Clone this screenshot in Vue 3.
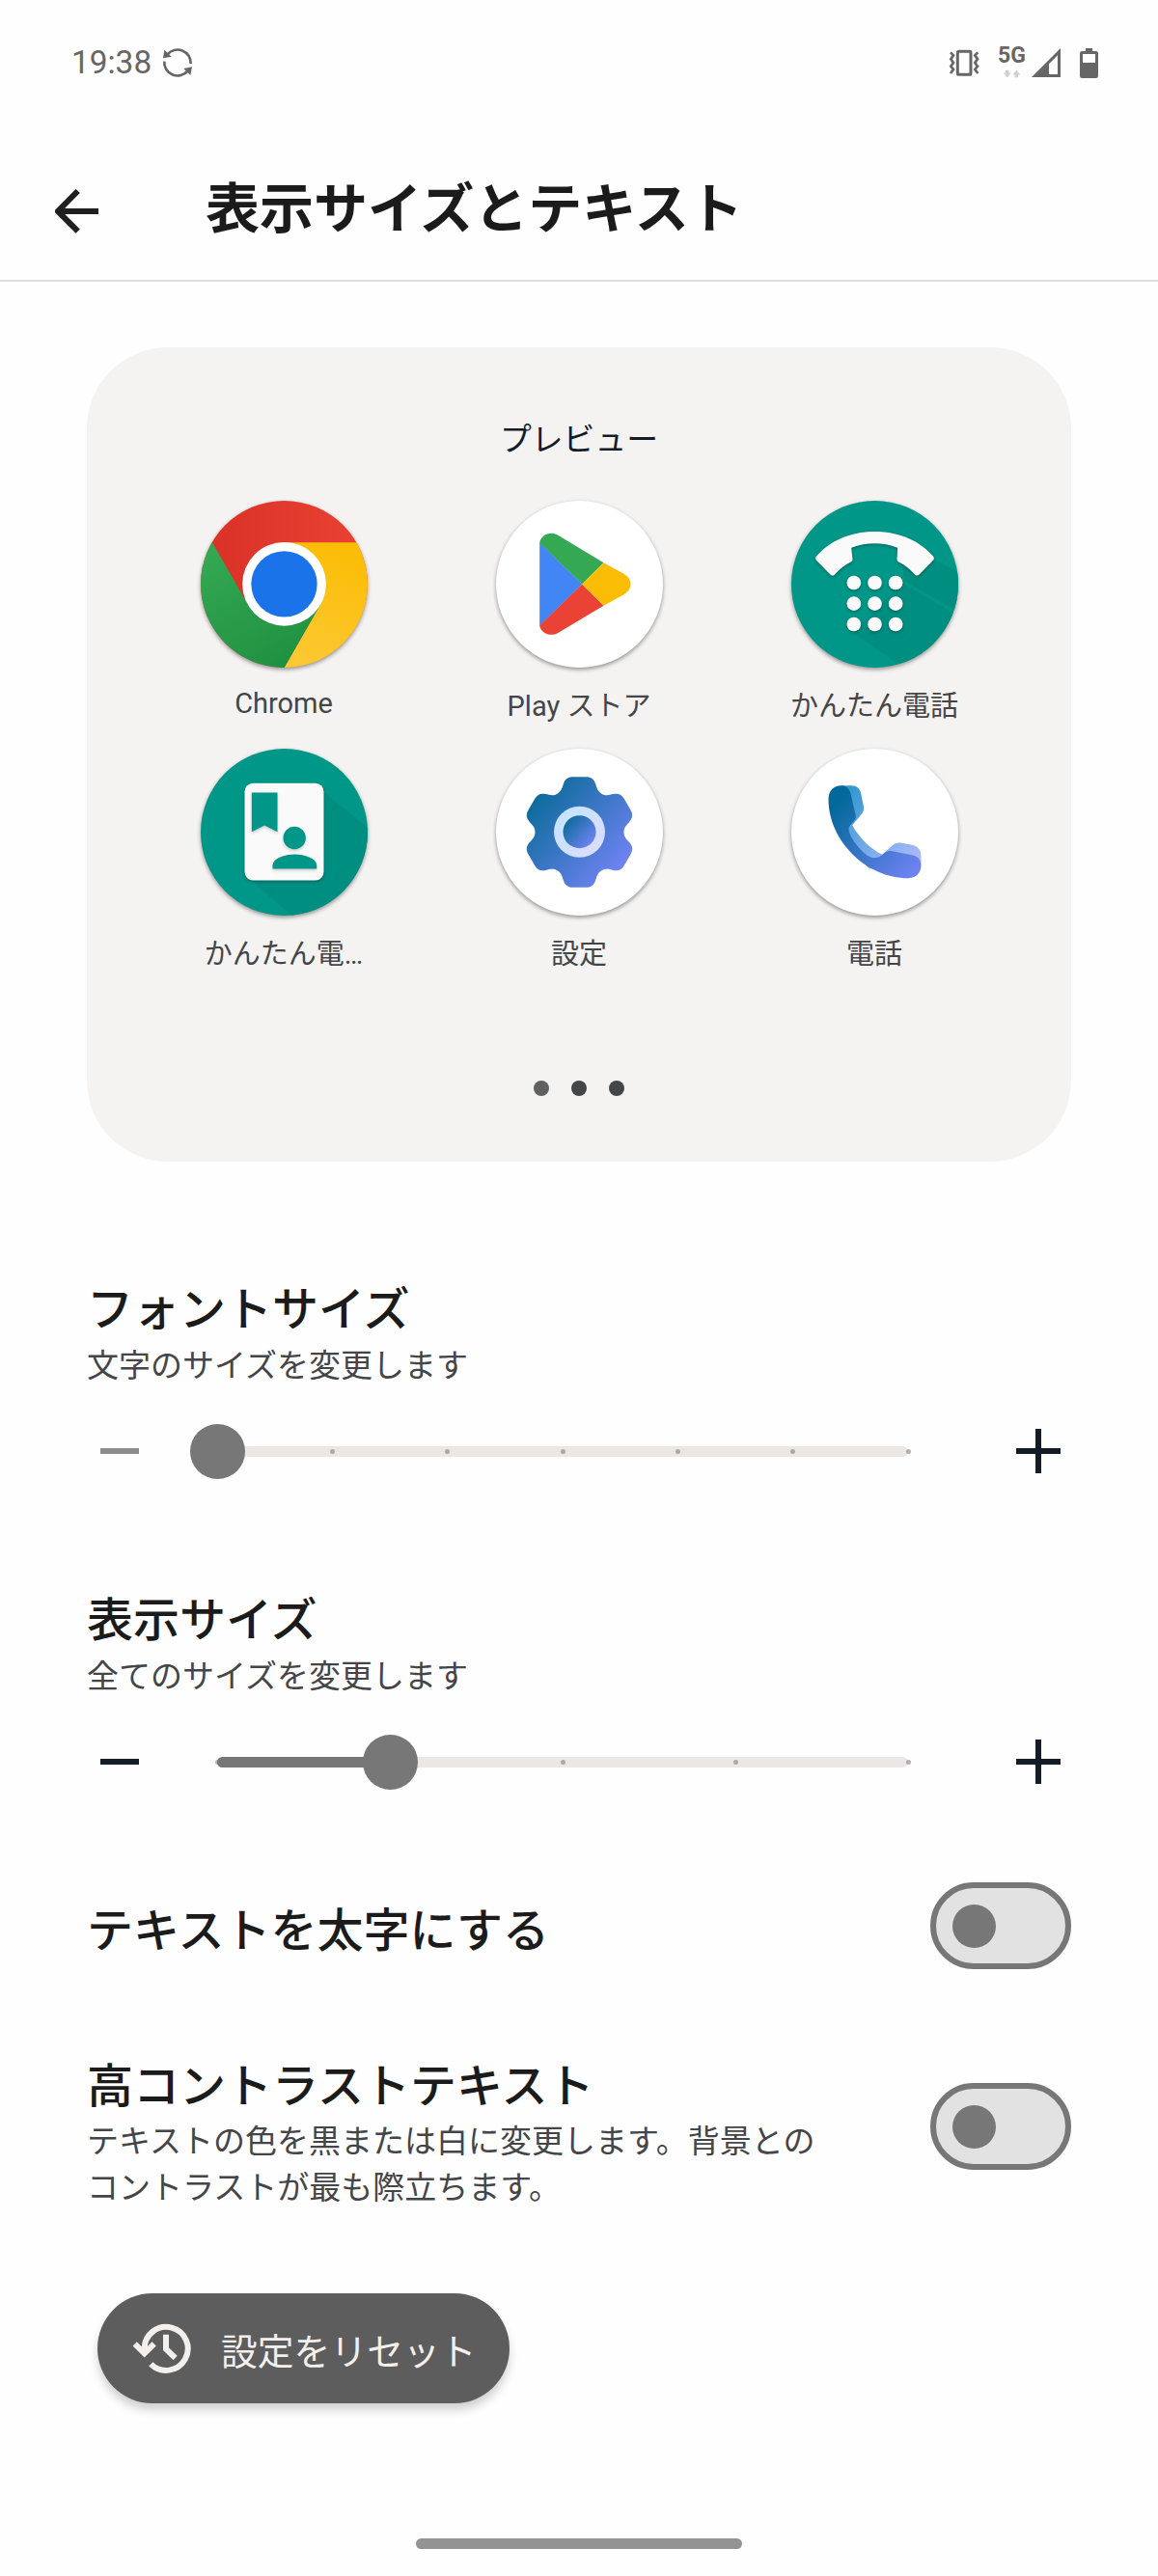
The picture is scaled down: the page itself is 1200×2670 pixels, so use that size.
<script setup>
import { ref } from 'vue'

// Apps shown inside the preview card
const apps = [
  { id: 'chrome', label: 'Chrome', viewBox: '82.5 56 519 519' },
  { id: 'play', label: 'Play ストア', viewBox: '70.5 296.5 519 519' },
  { id: 'easyphone', label: 'かんたん電話', viewBox: '88.5 56 519 519' },
  { id: 'contacts', label: 'かんたん電…', viewBox: '82.5 47.5 519 519' },
  { id: 'settings', label: '設定', viewBox: '70.5 47.5 519 519' },
  { id: 'phone', label: '電話', viewBox: '88.5 47.5 519 519' },
]

// Slider sections, value is the selected step
const sliders = ref([
  { title: 'フォントサイズ', text: '文字のサイズを変更します', value: 0, steps: 6 },
  { title: '表示サイズ', text: '全てのサイズを変更します', value: 1, steps: 4 },
])

const boldText = ref(false)
const highContrast = ref(false)

const percent = (value, steps) => (value / steps) * 100 + '%'

const change = (slider, amount) => {
  slider.value = Math.min(slider.steps, Math.max(0, slider.value + amount))
}

const reset = () => {
  sliders.value[0].value = 0
  sliders.value[1].value = 1
  boldText.value = false
  highContrast.value = false
}

// Build the gear outline by rotating one tooth six times
const tooth = [
  ['C', -56, -127, -54, -138, -50, -150],
  ['C', -45, -165, -36, -172, -20, -172],
  ['L', 20, -172],
  ['C', 36, -172, 45, -165, 50, -150],
  ['C', 54, -138, 56, -127, 69, -119.5],
]
const gearPath = () => {
  let d = 'M261 187.5'
  for (let i = 0; i < 6; i++) {
    const a = (i * Math.PI) / 3
    for (const [cmd, ...p] of tooth) {
      d += cmd
      for (let j = 0; j < p.length; j += 2) {
        const x = 330 + p[j] * Math.cos(a) - p[j + 1] * Math.sin(a)
        const y = 307 + p[j] * Math.sin(a) + p[j + 1] * Math.cos(a)
        d += x.toFixed(1) + ' ' + y.toFixed(1) + ' '
      }
    }
  }
  return d + 'Z'
}
const gear = gearPath()
</script>

<template>
  <div class="screen">
    <!-- Status bar -->
    <div class="status-bar">
      <div class="status-left">
        <span class="clock">19:38</span>
        <svg class="sync" viewBox="505 148 96 96">
          <g fill="none" stroke="#666" stroke-width="8">
            <path d="M521 171A41 41 0 0 1 594 199" />
            <path d="M512 192A41 41 0 0 0 585 221" />
          </g>
          <path d="M512 156L508 182L534 177Z" fill="#666" />
          <path d="M598 209L572 214L593 235Z" fill="#666" />
        </svg>
      </div>
      <div class="status-right">
        <svg class="vibrate" viewBox="549 147 96 93">
          <rect x="577" y="157" width="41" height="72" rx="5" fill="none" stroke="#666" stroke-width="9" />
          <g fill="none" stroke="#666" stroke-width="8">
            <path d="M555 160L564 169L556 181L564 192L556 203L564 213L555 225" />
            <path d="M640 160L631 169L639 181L631 192L639 203L631 213L640 225" />
          </g>
        </svg>
        <div class="network">
          <span>5G</span>
          <svg viewBox="717 214 57 28" fill="#d0d0d0">
            <path d="M725 216h11v9h7l-12 15-13-15h7z" />
            <path d="M755 240h11v-9h7l-12-15-13 15h7z" />
          </svg>
        </div>
        <svg class="signal" viewBox="807 147 90 90">
          <path d="M897 147V237H807ZM888 169L861 196V228H888Z" fill="#666" fill-rule="evenodd" />
        </svg>
        <svg class="battery" viewBox="957 147 57 93">
          <path d="M975 147h21v9h11q7 0 7 7v70q0 7-7 7h-43q-7 0-7-7v-70q0-7 7-7h11zM966 165v27h39v-27z" fill="#666" fill-rule="evenodd" />
        </svg>
      </div>
    </div>

    <!-- Title bar -->
    <header class="header">
      <button class="back">
        <svg viewBox="171 588 135 138">
          <path d="M242 594L180 657L242 719M182 657H306" fill="none" stroke="#1f1f1f" stroke-width="18" />
        </svg>
      </button>
      <h1>表示サイズとテキスト</h1>
    </header>

    <main class="content">
      <!-- Home screen preview -->
      <section class="preview">
        <p class="preview-title">プレビュー</p>
        <div class="apps">
          <div v-for="app in apps" :key="app.id" class="app">
            <svg class="app-icon" :class="app.id" :viewBox="app.viewBox">
              <g v-if="app.id === 'chrome'">
                <defs>
                  <linearGradient id="red" x1="0" x2="1"><stop stop-color="#d93025" /><stop offset="1" stop-color="#ea4335" /></linearGradient>
                  <linearGradient id="green" x1=".3" y1="0" x2=".8" y2="1"><stop stop-color="#34a853" /><stop offset="1" stop-color="#1e8e3e" /></linearGradient>
                  <linearGradient id="yellow" x1=".6" y1="0" x2=".3" y2="1"><stop stop-color="#fbbc04" /><stop offset="1" stop-color="#fcc934" /></linearGradient>
                </defs>
                <rect x="70" y="40" width="550" height="550" fill="url(#red)" />
                <path d="M342 186H640V590H333L454 380Z" fill="url(#yellow)" />
                <path d="M118 185L230 380L342 440L454 380L342 576L333 600H60V185Z" fill="url(#green)" />
                <circle cx="342" cy="315" r="130" fill="#fff" />
                <circle cx="342" cy="315" r="102.5" fill="#1a73e8" />
              </g>

              <g v-else-if="app.id === 'play'">
                <path d="M206 426L338 556L206 686Z" fill="#4285f4" />
                <path d="M206 428C209 404 239 390 262 403L405 489L338 556Z" fill="#34a853" />
                <path d="M206 684C209 708 239 720 262 708L405 623L338 556Z" fill="#ea4335" />
                <path d="M405 489L468 524C496 540 496 572 468 588L405 623L338 556Z" fill="#fbbc04" />
              </g>

              <g v-else-if="app.id === 'easyphone'">
                <path d="M540 243L620 285V410L440 306L430 240Z" fill="#008e80" />
                <path d="M434 312L600 410L560 540L420 562L280 468Z" fill="#008e80" />
                <g class="raised" fill="#fafafa">
                  <path d="M167 228C206 184 266 152 348 152C430 152 490 184 529 228Q535 235 529 242L487 285Q480 292 473 286Q450 260 421 246Q417 243 417 238L419 202Q348 176 275 202L279 238Q279 243 275 246Q246 260 223 286Q216 292 209 285L167 242Q161 235 167 228Z" />
                  <template v-for="y in [311, 376, 440]" :key="y">
                    <circle v-for="x in [283, 348, 413]" :key="x" :cx="x" :cy="y" r="22" />
                  </template>
                </g>
              </g>

              <g v-else-if="app.id === 'contacts'">
                <path d="M462 180L610 300V570H370L230 450Z" fill="#008e80" />
                <rect class="raised" x="219" y="155" width="246" height="302" rx="26" fill="#fafafa" />
                <g class="raised soft" fill="#009688">
                  <path d="M241 184H321V306L281 286L241 306Z" />
                  <circle cx="374" cy="325" r="35" />
                  <path d="M306 421V409C308 388 343 376 374 376C406 376 441 388 443 409V421Z" />
                </g>
              </g>

              <g v-else-if="app.id === 'settings'">
                <defs>
                  <linearGradient id="gear" x1=".12" y1=".12" x2=".88" y2=".8"><stop stop-color="#0b6b9a" /><stop offset="1" stop-color="#6c82f0" /></linearGradient>
                  <linearGradient id="ring" x1="0" y1="0" x2="1" y2="1"><stop stop-color="#c2e4ff" /><stop offset="1" stop-color="#dfdcff" /></linearGradient>
                </defs>
                <path :d="gear" fill="url(#gear)" />
                <circle cx="330" cy="306.5" r="79.5" fill="url(#ring)" />
                <circle cx="330" cy="306" r="51" fill="url(#gear)" />
              </g>

              <g v-else>
                <defs>
                  <linearGradient id="back" x1="0" y1="0" x2="1" y2="1"><stop offset=".1" stop-color="#3398d0" /><stop offset="1" stop-color="#b7bcff" /></linearGradient>
                  <linearGradient id="front" x1="0" y1=".1" x2=".95" y2="1"><stop offset=".1" stop-color="#03699a" /><stop offset="1" stop-color="#7383f8" /></linearGradient>
                </defs>
                <path d="M243 162H275C292 162 302 172 305 186L314 230Q316 240 308 250L278 285C300 325 335 360 372 377L403 348Q413 338 428 340L465 347Q492 354 492 382V410L330 420L230 300Z" fill="url(#back)" />
                <path d="M204 204C204 178 220 162 243 162C258 162 270 172 273 187L289 256C292 272 270 280 267 296C265 318 308 375 335 385C350 390 364 385 372 377C380 368 388 364 402 366L464 378C483 382 492 394 492 410C492 436 474 450 452 450C322 450 204 334 204 204Z" fill="url(#front)" />
              </g>
            </svg>
            <span class="app-label" :class="{ latin: app.id === 'chrome' }">{{ app.label }}</span>
          </div>
        </div>
        <div class="dots"><i></i><i></i><i></i></div>
      </section>

      <!-- Size sliders -->
      <section v-for="slider in sliders" :key="slider.title" class="size-section">
        <h2>{{ slider.title }}</h2>
        <p class="summary">{{ slider.text }}</p>
        <div class="slider-row">
          <button class="step minus" :disabled="slider.value === 0" @click="change(slider, -1)"></button>
          <div class="track">
            <div class="track-active" :style="{ width: percent(slider.value, slider.steps) }"></div>
            <i
              v-for="n in slider.steps + 1"
              :key="n"
              class="tick"
              :style="{ left: percent(n - 1, slider.steps) }"
            ></i>
            <div class="thumb" :style="{ left: percent(slider.value, slider.steps) }"></div>
          </div>
          <button class="step plus" @click="change(slider, 1)"></button>
        </div>
      </section>

      <!-- Switches -->
      <section class="switch-row bold-row">
        <h2>テキストを太字にする</h2>
        <button class="switch" :class="{ on: boldText }" @click="boldText = !boldText"></button>
      </section>

      <section class="switch-row contrast-row">
        <div>
          <h2>高コントラストテキスト</h2>
          <p class="summary">テキストの色を黒または白に変更します。背景との<br />コントラストが最も際立ちます。</p>
        </div>
        <button class="switch" :class="{ on: highContrast }" @click="highContrast = !highContrast"></button>
      </section>

      <button class="reset" @click="reset">
        <svg viewBox="170 860 186 162">
          <g fill="none" stroke="#f3efec" stroke-width="18">
            <path d="M208 955V942A67.5 67.5 0 1 1 228 990" />
            <path d="M178 927L208 957L238 927" />
            <path d="M275 898V943L304 971" />
          </g>
        </svg>
        <span>設定をリセット</span>
      </button>
    </main>

    <div class="nav-handle"></div>
  </div>
</template>

<style>
body {
  margin: 0;
  background: #fefefe;
}
</style>

<style scoped>
.screen {
  width: 1200px;
  height: 2670px;
  background: #fefefe;
  color: #1b1b1b;
  font-family: Roboto, "Noto Sans CJK JP", sans-serif;
  display: flex;
  flex-direction: column;
  overflow: hidden;
}

h1,
h2,
p {
  margin: 0;
}

button {
  border: none;
  background: none;
  padding: 0;
  font-family: inherit;
  cursor: pointer;
}

svg {
  display: block;
}

.status-bar {
  height: 130px;
  box-sizing: border-box;
  padding: 0 62px 0 74px;
  display: flex;
  justify-content: space-between;
  align-items: center;
  color: #666;
}

.status-left,
.status-right {
  display: flex;
  align-items: center;
}

.clock {
  font-size: 33.4px;
  line-height: 40px;
  width: 94px;
}

.sync {
  width: 32px;
  height: 32px;
}

.vibrate {
  width: 32px;
  height: 31px;
  margin-right: 19px;
}

.network {
  width: 29px;
  height: 32px;
  margin-right: 6px;
  display: flex;
  flex-direction: column;
  align-items: center;
  justify-content: space-between;
}

.network span {
  font-size: 23px;
  font-weight: 700;
  line-height: 17px;
}

.network svg {
  width: 19px;
  height: 9px;
}

.signal {
  width: 30px;
  height: 30px;
  margin-right: 20px;
}

.battery {
  width: 19px;
  height: 31px;
}

.header {
  height: 162px;
  box-sizing: border-box;
  border-bottom: 2px solid #e0dbd7;
  padding-left: 57px;
  display: flex;
  align-items: flex-start;
}

.back {
  width: 45px;
  height: 46px;
  margin: 66px 111px 0 0;
}

.back svg {
  width: 45px;
  height: 46px;
}

h1 {
  font-size: 56px;
  font-weight: 700;
  line-height: 80px;
  margin-top: 47px;
}

.content {
  padding: 68px 90px 0;
  display: flex;
  flex-direction: column;
}

.preview {
  height: 844px;
  box-sizing: border-box;
  background: #f4f3f1;
  border-radius: 84px;
  padding: 72px 51px 0;
  margin-bottom: 119px;
}

.preview-title {
  font-size: 32.8px;
  line-height: 48px;
  text-align: center;
  color: #141c28;
}

.apps {
  margin-top: 39px;
  display: grid;
  grid-template-columns: repeat(3, 306px);
  grid-auto-rows: 257px;
}

.app {
  display: flex;
  flex-direction: column;
  align-items: center;
}

.app-icon {
  width: 173px;
  height: 173px;
  border-radius: 50%;
  background: #fff;
  box-shadow: 0 2px 4px rgba(0, 0, 0, 0.4);
}

.easyphone,
.contacts {
  background: #009688;
}

.raised {
  filter: drop-shadow(0 4px 4px rgba(0, 0, 0, 0.3));
}

.raised.soft {
  filter: drop-shadow(0 5px 5px rgba(0, 0, 0, 0.2));
}

.app-label {
  margin-top: 16px;
  font-size: 29px;
  line-height: 48px;
  color: #444548;
}

.app-label.latin {
  margin-top: 13px;
}

.dots {
  margin-top: 87px;
  display: flex;
  justify-content: center;
  gap: 23px;
}

.dots i {
  width: 16px;
  height: 16px;
  border-radius: 50%;
  background: #444548;
}

.dots i:first-child {
  background: #606060;
}

.size-section {
  margin-bottom: 111px;
}

h2 {
  font-size: 48px;
  font-weight: 500;
  line-height: 69px;
}

.summary {
  font-size: 33px;
  line-height: 48px;
  color: #444548;
}

.slider-row {
  margin-top: 34px;
  height: 60px;
  display: flex;
  align-items: center;
}

.step {
  width: 46px;
  height: 46px;
  color: #141c28;
  background: linear-gradient(currentColor, currentColor) center / 46px 6px no-repeat;
}

.minus {
  margin: 0 78px 0 11px;
  background-size: 40px 6px;
}

.minus:disabled {
  color: #8f8e8c;
}

.plus {
  margin-left: 112px;
  background:
    linear-gradient(currentColor, currentColor) center / 46px 6px no-repeat,
    linear-gradient(currentColor, currentColor) center / 6px 46px no-repeat;
}

.track {
  position: relative;
  width: 716px;
  height: 11px;
  border-radius: 6px;
  background: #ebe7e4;
}

.track-active {
  height: 11px;
  border-radius: 6px;
  background: #777;
}

.tick {
  position: absolute;
  top: 3px;
  width: 5px;
  height: 5px;
  margin-left: -2.5px;
  border-radius: 50%;
  background: rgba(119, 119, 119, 0.55);
}

.thumb {
  position: absolute;
  top: -23px;
  width: 57px;
  height: 57px;
  margin-left: -28px;
  border-radius: 50%;
  background: #777;
}

.switch-row {
  display: flex;
  justify-content: space-between;
}

.bold-row {
  height: 90px;
  margin-top: -16px;
  align-items: center;
}

.bold-row h2 {
  padding-top: 10px;
}

.contrast-row {
  height: 165px;
  margin-top: 87px;
}

.contrast-row .summary {
  margin-top: -1px;
}

.contrast-row .switch {
  margin-top: 31px;
}

.switch {
  flex: none;
  width: 146px;
  height: 90px;
  box-sizing: border-box;
  border: 6px solid #777;
  border-radius: 45px;
  background: #e2e2e2;
  display: flex;
  align-items: center;
  padding: 0 17px;
}

.switch::before {
  content: "";
  width: 45px;
  height: 45px;
  border-radius: 50%;
  background: #777;
}

.switch.on {
  justify-content: flex-end;
}

.reset {
  width: 427px;
  height: 114px;
  margin: 84px 0 0 11px;
  padding-left: 36px;
  border-radius: 57px;
  background: #5d5d5d;
  box-shadow: 0 7px 10px rgba(0, 0, 0, 0.18);
  color: #f3efec;
  display: flex;
  align-items: center;
}

.reset svg {
  width: 62px;
  height: 54px;
  margin-right: 30px;
}

.reset span {
  font-size: 37.8px;
  line-height: 56px;
  padding-top: 7px;
}

.nav-handle {
  width: 338px;
  height: 11px;
  margin: auto auto 28px;
  border-radius: 6px;
  background: #939393;
}
</style>
